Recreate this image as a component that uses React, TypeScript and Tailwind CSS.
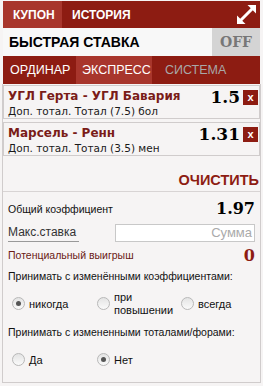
const bets = [
  { title: "УГЛ Герта - УГЛ Бавария", sub: "Доп. тотал. Тотал (7.5) бол", odd: "1.5" },
  { title: "Марсель - Ренн", sub: "Доп. тотал. Тотал (3.5) мен", odd: "1.31" },
];

function Radio({ checked }: { checked?: boolean }) {
  return (
    <span className="w-[13px] h-[13px] rounded-full border border-[#b8b8b8] bg-gradient-to-b from-[#e4e4e4] to-[#fafafa] flex items-center justify-center shrink-0">
      {checked && <span className="w-[5px] h-[5px] rounded-full bg-[#555]" />}
    </span>
  );
}

function ExpandIcon() {
  return (
    <svg width="19" height="19" viewBox="0 0 19 19" fill="white">
      <polygon points="19,0 19,8.5 10.5,0" />
      <polygon points="0,19 0,10.5 8.5,19" />
      <line x1="3.5" y1="15.5" x2="15.5" y2="3.5" stroke="white" strokeWidth="3" />
    </svg>
  );
}

export default function App() {
  return (
    <div className="w-[263px] h-[386px] bg-[#f6f4f4] text-[#111] font-['Liberation_Sans',Arial,sans-serif] pt-[1px] px-[2px] overflow-hidden">
      {/* top bar */}
      <div className="mx-[1px] h-[27px] bg-[#8d1c12] flex items-stretch text-white font-bold text-[12px]">
        <div className="bg-[#a8362c] w-[59px] pl-[10px] flex items-center">КУПОН</div>
        <div className="pl-[10px] flex items-center">ИСТОРИЯ</div>
        <div className="flex-1" />
        <div className="flex items-center pr-[4px]">
          <ExpandIcon />
        </div>
      </div>

      {/* quick bet */}
      <div className="mx-[1px] h-[28px] bg-[#f8f8f8] flex items-center justify-between">
        <span className="pl-[6px] font-bold text-[14px] text-black">БЫСТРАЯ СТАВКА</span>
        <span className="w-[48px] h-full bg-[#d4d4d4] flex items-center justify-center text-[#777] font-bold text-[14px] font-['DejaVu_Serif',serif]">
          OFF
        </span>
      </div>

      {/* type tabs */}
      <div className="mx-[1px] h-[28px] bg-[#8d1c12] flex items-stretch text-[12.5px]">
        <div className="w-[73px] pl-[7px] flex items-center text-white">ОРДИНАР</div>
        <div className="w-[76px] bg-[#a8362c] pl-[6px] flex items-center text-white">ЭКСПРЕСС</div>
        <div className="pl-[13px] flex items-center text-[#a8a8a8]">СИСТЕМА</div>
      </div>

      {/* content */}
      <div className="border border-[#d0cccc] border-t-0 h-[299px] flex flex-col">
        <div className="flex flex-col gap-[3px] pt-[1px]">
          {bets.map((b) => (
            <div key={b.title} className="border border-[#d0cccc] h-[34px] pl-[4px] pr-[1px] flex items-start justify-between">
              <div className="flex flex-col pt-[2px] font-['DejaVu_Sans',sans-serif]">
                <span className="text-[12px] font-bold text-[#7a1c18] leading-[16px]">{b.title}</span>
                <span className="text-[10.5px] text-[#1a1a1a] leading-[14px]">{b.sub}</span>
              </div>
              <div className="flex items-center gap-[3px] pt-[3px]">
                <span className="font-['DejaVu_Serif',serif] font-bold text-[17px] leading-[17px] text-black">{b.odd}</span>
                <span className="w-[15px] h-[15px] bg-[#8d1c12] text-white text-[11px] font-bold flex items-center justify-center leading-none">
                  x
                </span>
              </div>
            </div>
          ))}
        </div>

        <div className="flex justify-end pr-[1px] mt-[15px]">
          <span className="text-[#8d1c12] font-bold text-[14.5px] leading-[18px]">ОЧИСТИТЬ</span>
        </div>

        <div className="border-t border-[#d8d4d4] mt-[2px] px-[5px] pt-[8px] flex flex-col">
          <div className="flex items-end justify-between h-[18px]">
            <span className="text-[10.5px]">Общий коэффициент</span>
            <span className="font-['DejaVu_Serif',serif] font-bold text-[16px] leading-[18px] text-black">1.97</span>
          </div>
          <div className="flex items-center justify-between mt-[5px]">
            <span className="text-[12px] text-[#333] border-b border-[#999] leading-[18px] pr-[3px]">Макс.ставка</span>
            <div className="w-[140px] h-[18px] border border-[#c8c8c8] bg-white flex items-center justify-end pr-[2px] text-[13px] text-[#aaa]">
              Сумма
            </div>
          </div>
          <div className="flex items-center justify-between mt-[5px] h-[18px]">
            <span className="text-[10.5px] text-[#6a1a14]">Потенциальный выигрыш</span>
            <span className="font-['DejaVu_Serif',serif] font-bold text-[16px] text-[#8d1c12]">0</span>
          </div>
          <div className="text-[10.5px] mt-[4px]">Принимать с изменёнными коэффициентами:</div>
          <div className="flex items-center mt-[5px] h-[28px] text-[11px]">
            <label className="flex items-center gap-[4px] w-[89px] pl-[4px]">
              <Radio checked />
              никогда
            </label>
            <label className="flex items-center gap-[4px] w-[84px]">
              <Radio />
              <span className="leading-[13px]">
                при
                <br />
                повышении
              </span>
            </label>
            <label className="flex items-center gap-[4px]">
              <Radio />
              всегда
            </label>
          </div>
          <div className="text-[10.5px] mt-[7px]">Принимать с измененными тоталами/форами:</div>
          <div className="flex items-center mt-[11px] text-[11px]">
            <label className="flex items-center gap-[4px] w-[89px] pl-[4px]">
              <Radio />
              Да
            </label>
            <label className="flex items-center gap-[4px]">
              <Radio checked />
              Нет
            </label>
          </div>
        </div>
      </div>
    </div>
  );
}
